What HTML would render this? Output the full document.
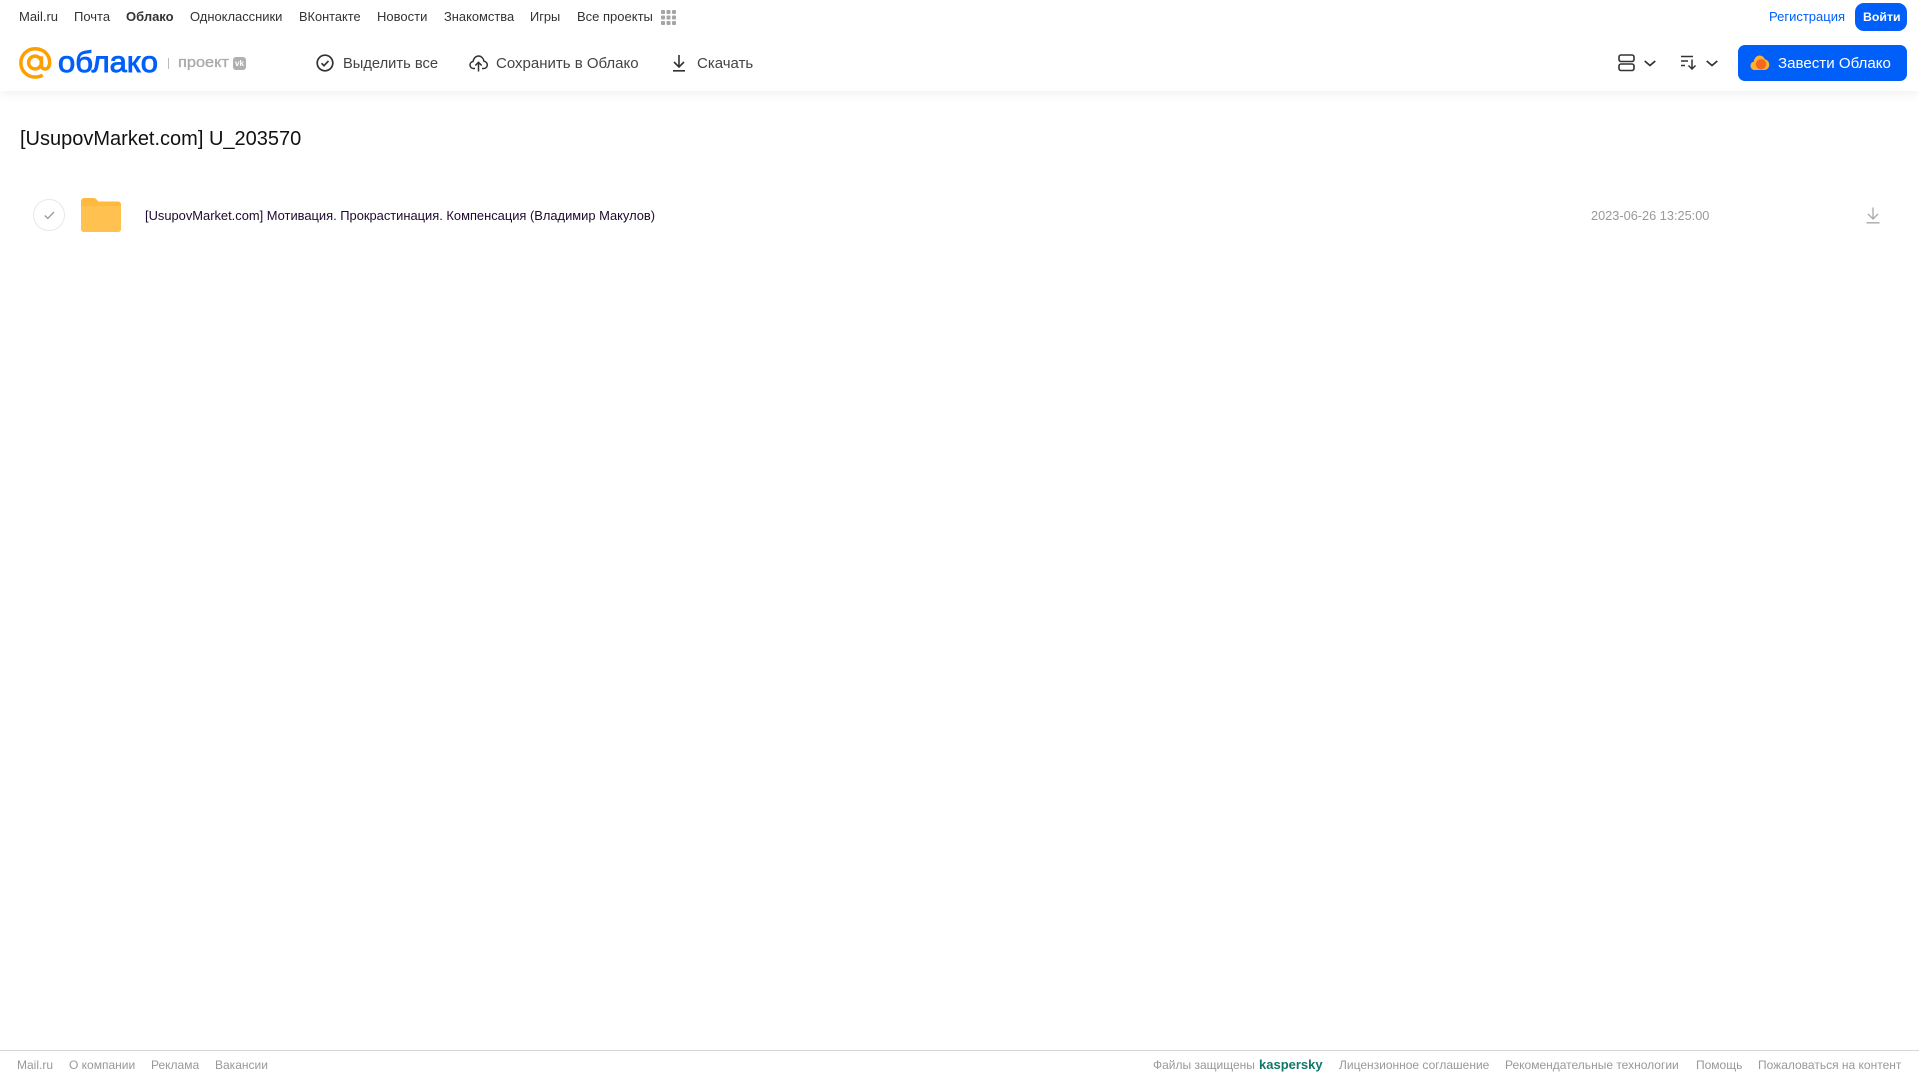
<!DOCTYPE html>
<html lang="ru">
<head>
<meta charset="utf-8">
<title>[UsupovMarket.com] U_203570</title>
<style>
html,body{margin:0;padding:0;background:#fff;}
body{width:1919px;height:1079px;position:relative;overflow:hidden;font-family:"Liberation Sans",sans-serif;color:#2c2d2e;}
.t{position:absolute;white-space:nowrap;line-height:20px;text-decoration:none;}
.n{font-size:12.8px;top:7px;color:#333;}
.a{font-size:15px;top:53.5px;color:#444;}
.f{font-size:12px;top:1055px;color:#999;}
svg{position:absolute;overflow:visible;}
#hdr{position:absolute;left:0;top:0;width:1919px;height:91px;background:#fff;box-shadow:0 2px 10px rgba(0,0,0,.07);}
#foot{position:absolute;left:0;top:1050px;width:1919px;height:1px;background:#d6d6d6;}
.btn{position:absolute;background:#005ff9;color:#fff;}
</style>
</head>
<body>
<header id="hdr"></header>
<nav>
<a class="t n" style="left:19px;font-size:13px">Mail.ru</a>
<a class="t n" style="left:74px;font-size:13px">Почта</a>
<a class="t n" style="left:126px;font-weight:bold;font-size:13px">Облако</a>
<a class="t n" style="left:190px;font-size:12.950px">Одноклассники</a>
<a class="t n" style="left:299px">ВКонтакте</a>
<a class="t n" style="left:377px;font-size:13px">Новости</a>
<a class="t n" style="left:444px;font-size:12.900px">Знакомства</a>
<a class="t n" style="left:530px">Игры</a>
<a class="t n" style="left:577px;font-size:13px">Все проекты</a>
</nav>
<svg style="left:661px;top:10px" width="15" height="15" fill="#a5a5a5">
<rect x="0" y="0" width="4" height="4" rx="1"/><rect x="5.500" y="0" width="4" height="4" rx="1"/><rect x="11" y="0" width="4" height="4" rx="1"/>
<rect x="0" y="5.500" width="4" height="4" rx="1"/><rect x="5.500" y="5.500" width="4" height="4" rx="1"/><rect x="11" y="5.500" width="4" height="4" rx="1"/>
<rect x="0" y="11" width="4" height="4" rx="1"/><rect x="5.500" y="11" width="4" height="4" rx="1"/><rect x="11" y="11" width="4" height="4" rx="1"/>
</svg>
<a class="t n" style="left:1769px;color:#005ff9;font-size:13px">Регистрация</a>
<div class="btn" style="left:1855px;top:3px;width:52px;height:28px;border-radius:9px"></div>
<a class="t n" style="left:1863px;color:#fff;font-weight:bold;font-size:12.300px">Войти</a>

<svg style="left:19px;top:47px" width="33" height="33" viewBox="0 0 34 34" fill="none" stroke="#ff9e00" stroke-width="3.600">
<circle cx="16.500" cy="16" r="6.600"/>
<path d="M23.100 9.500v9.200c0 2.600 1.600 4 3.600 4 2.400 0 4.900-2 4.900-6.700C31.600 7.600 25 1.800 16.600 1.800 8.400 1.800 1.900 8.300 1.900 16.300c0 8.200 6.500 14.700 14.800 14.700 3 0 5.500-.7 7.700-2"/>
</svg>
<svg style="left:58px;top:40px" width="105" height="44"><text x="0" y="32" font-family="Liberation Sans" font-size="30" fill="#005ff9" stroke="#005ff9" stroke-width=".9" textLength="100" lengthAdjust="spacingAndGlyphs">облако</text></svg>
<div style="position:absolute;left:168px;top:58px;width:1px;height:11px;background:#bbb"></div>
<svg style="left:178px;top:50px" width="70" height="26"><text x="0" y="17" font-family="Liberation Sans" font-size="15" fill="#a9a9a9" stroke="#a9a9a9" stroke-width=".3" textLength="51" lengthAdjust="spacingAndGlyphs">проект</text></svg>
<div style="position:absolute;left:233px;top:57px;width:13px;height:13px;border-radius:3px;background:#b0b0b0;color:#fff;font:bold 8px/13px 'Liberation Sans',sans-serif;text-align:center">vk</div>

<svg style="left:316px;top:54px" width="18" height="18" fill="none" stroke="#333" stroke-width="1.700">
<circle cx="9" cy="9" r="7.800"/><path d="M5.500 9.300l2.500 2.400 4.500-4.800"/>
</svg>
<a class="t a" style="left:343px;font-size:14.700px">Выделить все</a>
<svg style="left:469px;top:54px" width="19" height="18" fill="none" stroke="#333" stroke-width="1.500">
<path d="M6 14.500H4.500C2.500 14.500 1 13 1 11c0-1.800 1.200-3.200 3-3.500C4.500 4.300 6.800 2 9.500 2s5 2.200 5.500 5.300c1.900.2 3.300 1.800 3.300 3.700 0 2-1.500 3.500-3.500 3.500H13"/>
<path d="M9.500 17.500V8.500M6.300 11.500l3.200-3.200 3.200 3.200"/>
</svg>
<a class="t a" style="left:496px">Сохранить в Облако</a>
<svg style="left:672px;top:54px" width="14" height="18" fill="none" stroke="#333" stroke-width="1.600">
<path d="M7 1v11.500M2 8l5 5 5-5M1 16.800h12"/>
</svg>
<a class="t a" style="left:697px">Скачать</a>

<svg style="left:1618px;top:54px" width="17" height="18" fill="none" stroke="#333" stroke-width="1.600">
<rect x="1" y="1" width="15" height="6.500" rx="2"/><rect x="1" y="10" width="15" height="6.500" rx="2"/>
</svg>
<svg style="left:1644px;top:60px" width="12" height="7" fill="none" stroke="#333" stroke-width="1.700"><path d="M.7 1l5.300 4.500L11.300 1"/></svg>
<svg style="left:1681px;top:55px" width="16" height="15" fill="none" stroke="#333" stroke-width="1.500">
<path d="M0 1.500h12M0 6h7M0 10.500h4M11 4.500v9M7.500 10.500l3.500 3.500 3.500-3.500"/>
</svg>
<svg style="left:1706px;top:60px" width="12" height="7" fill="none" stroke="#333" stroke-width="1.700"><path d="M.7 1l5.300 4.500L11.300 1"/></svg>

<div class="btn" style="left:1738px;top:45px;width:169px;height:36px;border-radius:7px"></div>
<svg style="left:1750px;top:54px" width="20" height="17">
<path d="M5 16C2 16 .5 14 .5 11.700c0-2 1.300-3.500 3.200-3.900C4.200 4.300 6.500 1.500 9.500 1.500c2.500 0 4.500 1.500 5.300 3.800 2.500.5 4.500 2.800 4.500 5.500 0 3-2.300 5.200-5 5.200z" fill="#ffb02e"/>
<circle cx="11" cy="10.300" r="5.200" fill="#f4671f"/>
</svg>
<a class="t a" style="left:1778px;color:#fff;font-size:15.100px">Завести Облако</a>

<h1 class="t" style="margin:0;left:20px;top:127px;line-height:24px;font-size:20px;font-weight:normal;color:#111">[UsupovMarket.com] U_203570</h1>

<div style="position:absolute;left:33px;top:199px;width:30px;height:30px;border:1px solid #e8e8e8;border-radius:50%"></div>
<svg style="left:44px;top:211px" width="11" height="9" fill="none" stroke="#999" stroke-width="1.300"><path d="M.8 4.500l3 3L10 1"/></svg>
<svg style="left:81px;top:198px" width="40" height="34">
<path d="M0 3a3 3 0 0 1 3-3h9c2 0 3 .8 4 2l1.500 1.500H37a3 3 0 0 1 3 3V31a3 3 0 0 1-3 3H3a3 3 0 0 1-3-3z" fill="#ffb93d"/>
<path d="M0 8h40v23a3 3 0 0 1-3 3H3a3 3 0 0 1-3-3z" fill="#ffc14f"/>
</svg>
<a class="t" style="left:145px;top:206px;font-size:12.900px;color:#1f0a2e">[UsupovMarket.com] Мотивация. Прокрастинация. Компенсация (Владимир Макулов)</a>
<span class="t" style="left:1591px;top:206px;font-size:12.750px;color:#999">2023-06-26 13:25:00</span>
<svg style="left:1866px;top:207px" width="14" height="17" fill="none" stroke="#a8a8a8" stroke-width="1.300">
<path d="M7 .5v11M2 7l5 5 5-5M.5 15.800h13" />
</svg>

<div id="foot"></div>
<footer>
<a class="t f" style="left:17px">Mail.ru</a>
<a class="t f" style="left:69px">О компании</a>
<a class="t f" style="left:151px">Реклама</a>
<a class="t f" style="left:215px">Вакансии</a>
<span class="t f" style="left:1153px">Файлы защищены</span>
<span class="t f" style="left:1259px;font-weight:bold;color:#10776a;font-size:13px">kaspersky</span>
<a class="t f" style="left:1339px">Лицензионное соглашение</a>
<a class="t f" style="left:1505px">Рекомендательные технологии</a>
<a class="t f" style="left:1696px">Помощь</a>
<a class="t f" style="left:1758px">Пожаловаться на контент</a>
</footer>
</body>
</html>
